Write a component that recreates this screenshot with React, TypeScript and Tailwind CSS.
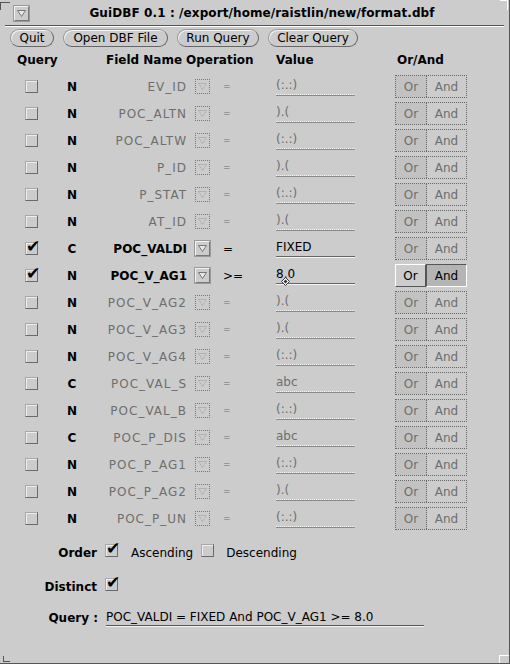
import clsx from "clsx";

type Field = {
  type: string;
  name: string;
  op: string;
  value: string;
  on?: boolean;
  join?: boolean;
};

const fields: Field[] = [
  { type: "N", name: "EV_ID", op: "=", value: "(:.:)" },
  { type: "N", name: "POC_ALTN", op: "=", value: ").(" },
  { type: "N", name: "POC_ALTW", op: "=", value: "(:.:)" },
  { type: "N", name: "P_ID", op: "=", value: ").(" },
  { type: "N", name: "P_STAT", op: "=", value: "(:.:)" },
  { type: "N", name: "AT_ID", op: "=", value: ").(" },
  { type: "C", name: "POC_VALDI", op: "=", value: "FIXED", on: true },
  { type: "N", name: "POC_V_AG1", op: ">=", value: "8.0", on: true, join: true },
  { type: "N", name: "POC_V_AG2", op: "=", value: ").(" },
  { type: "N", name: "POC_V_AG3", op: "=", value: ").(" },
  { type: "N", name: "POC_V_AG4", op: "=", value: "(:.:)" },
  { type: "C", name: "POC_VAL_S", op: "=", value: "abc" },
  { type: "N", name: "POC_VAL_B", op: "=", value: "(:.:)" },
  { type: "C", name: "POC_P_DIS", op: "=", value: "abc" },
  { type: "N", name: "POC_P_AG1", op: "=", value: "(:.:)" },
  { type: "N", name: "POC_P_AG2", op: "=", value: ").(" },
  { type: "N", name: "POC_P_UN", op: "=", value: "(:.:)" },
];

const buttons = [
  { label: "Quit", w: "w-[44px]" },
  { label: "Open DBF File", w: "w-[105px]" },
  { label: "Run Query", w: "w-[82px]" },
  { label: "Clear Query", w: "w-[90px]" },
];

function CheckBox({ checked }: { checked?: boolean }) {
  return (
    <span className="relative inline-block h-[13px] w-[13px] border border-t-[#a8a8a8] border-l-[#a8a8a8] border-b-[#6a6a6a] border-r-[#6a6a6a] bg-[#cccccc] shadow-[inset_1px_1px_0_#eeeeee]">
      {checked && (
        <span className="absolute left-[0px] top-[-5px] text-[17px] leading-none text-black">✔</span>
      )}
    </span>
  );
}

function MenuButton({ off }: { off?: boolean }) {
  return (
    <span
      className={clsx(
        "flex h-[15px] w-[15px] items-center justify-center",
        off
          ? "border border-dotted border-[#777]"
          : "border border-t-[#f2f2f2] border-l-[#f2f2f2] border-b-[#777] border-r-[#777] shadow-[0_0_0_1px_#9a9a9a]"
      )}
    >
      <svg width="9" height="7" viewBox="0 0 9 7">
        <path
          d="M0.5 0.5H8.5L4.5 6.5Z"
          fill={off ? "none" : "#e6e6e6"}
          stroke={off ? "#999" : "#777"}
          strokeDasharray={off ? "1 1" : undefined}
        />
      </svg>
    </span>
  );
}

// "And" is the chosen join on the only live pair
function OrAnd({ on }: { on?: boolean }) {
  if (!on) {
    return (
      <div className="flex h-[23px] w-[72px] border border-dotted border-[#666] text-[#6e6e6e]">
        <div className="flex w-[31px] items-center justify-center border-r border-dotted border-[#666] bg-[#c2c2c2]">
          Or
        </div>
        <div className="flex flex-1 items-center justify-center">And</div>
      </div>
    );
  }
  return (
    <div className="flex h-[23px] w-[72px] text-black">
      <div className="flex w-[31px] items-center justify-center border border-t-white border-l-white border-b-[#555] border-r-[#555] bg-[#cccccc]">
        Or
      </div>
      <div className="flex flex-1 items-center justify-center border border-t-[#555] border-l-[#555] border-b-white border-r-white bg-[#b4b4b4]">
        And
      </div>
    </div>
  );
}

function FieldRow({ f }: { f: Field }) {
  const dim = !f.on;
  return (
    <div className="flex h-[27px] items-center pl-[25px]">
      <CheckBox checked={f.on} />
      <div className="w-[68px] text-center font-bold text-black">{f.type}</div>
      <div
        className={clsx(
          "w-[81px] text-right",
          dim ? "text-[#6e6e6e] tracking-[1px]" : "font-bold text-black"
        )}
      >
        {f.name}
      </div>
      <div className="ml-[8px]">
        <MenuButton off={dim} />
      </div>
      <div className={clsx("ml-[13px] w-[53px]", dim ? "text-[9px] text-[#6e6e6e]" : "text-black")}>
        {f.op}
      </div>
      <div
        className={clsx(
          "relative w-[79px] pb-[1px] leading-[15px]",
          dim
            ? "border-b border-dotted border-[#f4f4f4] text-[#6e6e6e] shadow-[0_1px_0_#8a8a8a]"
            : "border-b border-[#666] text-black shadow-[0_1px_0_#f4f4f4]"
        )}
      >
        {f.value}
        {f.join && (
          <svg className="absolute left-[5px] top-[10px]" width="9" height="9" viewBox="0 0 9 9">
            <path d="M4.5 0.5L8.5 4.5L4.5 8.5L0.5 4.5Z" fill="#fff" stroke="#333" />
            <path d="M4.5 2.5L6.5 4.5L4.5 6.5L2.5 4.5Z" fill="#333" />
          </svg>
        )}
      </div>
      <div className="ml-[40px]">
        <OrAnd on={f.join} />
      </div>
    </div>
  );
}

export default function App() {
  return (
    <div className="relative h-[664px] w-[510px] overflow-hidden border-b border-r border-[#555] bg-[#cccccc] font-['DejaVu_Sans',sans-serif] text-[12px] text-black">
      {/* window corner marks */}
      <span className="absolute left-0 top-[2px] h-[8px] w-[10px] border-l border-t border-[#555]" />
      <span className="absolute right-[1px] top-[0px] h-[10px] w-[8px] border-r border-t border-white" />
      <span className="absolute bottom-[1px] left-[3px] h-[6px] w-[7px] border-b border-l border-[#555]" />
      <span className="absolute bottom-0 right-0 h-[8px] w-[10px] border-l border-t border-white" />

      <div className="flex h-[25px] items-center">
        <div className="ml-[14px] mt-[2px]">
          <MenuButton />
        </div>
        <div className="flex-1 pr-[14px] text-center text-[12px] font-bold tracking-[0.1px]">
          GuiDBF 0.1 : /export/home/raistlin/new/format.dbf
        </div>
      </div>
      <div className="mx-[5px] h-[1px] bg-[#555] shadow-[0_1px_0_#ffffff]" />

      <div className="mt-[3px] flex h-[18px] items-center gap-[9px] pl-[10px]">
        {buttons.map((b) => (
          <div
            key={b.label}
            className={clsx(
              "flex h-[18px] items-center justify-center rounded-full border border-[#666] border-l-[#999] border-t-[#999] bg-[#cccccc] shadow-[inset_1px_1px_0_#f4f4f4]",
              b.w
            )}
          >
            {b.label}
          </div>
        ))}
      </div>

      <div className="flex h-[26px] items-center font-bold">
        <div className="ml-[17px] w-[89px]">Query</div>
        <div className="w-[80px]">Field Name</div>
        <div className="w-[90px]">Operation</div>
        <div className="w-[121px]">Value</div>
        <div>Or/And</div>
      </div>

      <div className="flex flex-col">
        {fields.map((f) => (
          <FieldRow key={f.name} f={f} />
        ))}
      </div>

      <div className="mt-[8px] flex h-[26px] items-center">
        <div className="w-[97px] text-right font-bold">Order</div>
        <div className="ml-[8px]">
          <CheckBox checked />
        </div>
        <div className="ml-[13px]">Ascending</div>
        <div className="ml-[8px]">
          <CheckBox />
        </div>
        <div className="ml-[12px]">Descending</div>
      </div>

      <div className="mt-[8px] flex h-[26px] items-center">
        <div className="w-[97px] text-right font-bold">Distinct</div>
        <div className="ml-[8px]">
          <CheckBox checked />
        </div>
      </div>

      <div className="mt-[5px] flex h-[26px] items-center">
        <div className="w-[98px] text-right font-bold">Query :</div>
        <div className="ml-[8px] w-[318px] border-b border-[#555] leading-[15px] shadow-[0_1px_0_#f4f4f4]">
          POC_VALDI = FIXED And POC_V_AG1 &gt;= 8.0
        </div>
      </div>
    </div>
  );
}
